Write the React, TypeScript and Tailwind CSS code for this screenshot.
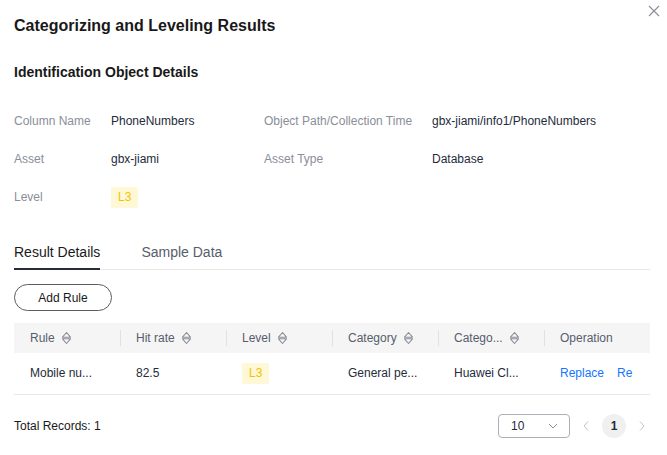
import React from "react";

function SortIcon() {
  return (
    <svg width="11" height="14" viewBox="0 0 11 14" className="ml-[6px] shrink-0">
      <path d="M5.5 1.5 L9.5 6.2 H1.5 Z M1.5 7.8 H9.5 L5.5 12.5 Z" fill="none" stroke="#8a8e99" strokeWidth="1.1" strokeLinejoin="round" />
    </svg>
  );
}

function Badge() {
  return (
    <span className="inline-flex h-[21px] items-center rounded-[2px] bg-[#fff8d6] px-[7px] text-[12px] text-[#f2c200]">L3</span>
  );
}

const cols = [
  { title: "Rule", sort: true },
  { title: "Hit rate", sort: true },
  { title: "Level", sort: true },
  { title: "Category", sort: true },
  { title: "Catego...", sort: true },
  { title: "Operation", sort: false },
];

export default function App() {
  return (
    <div className="relative h-[455px] w-[667px] overflow-hidden bg-white font-['Liberation_Sans',Arial,sans-serif] text-[#252b3a]">
      <button className="absolute right-[6px] top-[4px] p-[1px]" aria-label="close">
        <svg width="12" height="12" viewBox="0 0 12 12">
          <path d="M1 1 L11 11 M11 1 L1 11" stroke="#8a8e99" strokeWidth="1.1" />
        </svg>
      </button>

      <div className="pl-[14px] pr-[17px] pt-[14px]">
        <h1 className="text-[16px] font-bold leading-[24px] text-[#191919]">Categorizing and Leveling Results</h1>

        <h2 className="mt-[24px] text-[14px] font-bold leading-[20px] text-[#191919]">Identification Object Details</h2>

        <div className="mt-[20px] grid grid-cols-[97px_153px_168px_1fr] text-[12px]">
          <div className="flex h-[38px] items-center text-[#8a8e99]">Column Name</div>
          <div className="flex h-[38px] items-center">PhoneNumbers</div>
          <div className="flex h-[38px] items-center text-[#8a8e99]">Object Path/Collection Time</div>
          <div className="flex h-[38px] items-center">gbx-jiami/info1/PhoneNumbers</div>

          <div className="flex h-[38px] items-center text-[#8a8e99]">Asset</div>
          <div className="flex h-[38px] items-center">gbx-jiami</div>
          <div className="flex h-[38px] items-center text-[#8a8e99]">Asset Type</div>
          <div className="flex h-[38px] items-center">Database</div>

          <div className="flex h-[38px] items-center text-[#8a8e99]">Level</div>
          <div className="flex h-[38px] items-center"><Badge /></div>
          <div />
          <div />
        </div>

        <div className="mt-[26px] flex gap-[41px] border-b border-[#e8e8e8] text-[14px]">
          <div className="-mb-px border-b-2 border-[#252b3a] pb-[6px] leading-[20px] text-[#191919]">Result Details</div>
          <div className="pb-[6px] leading-[20px] text-[#575d6c]">Sample Data</div>
        </div>

        <button className="mt-[14px] h-[27px] w-[98px] rounded-full border border-[#5c5c5c] text-[12px] text-[#191919]">Add Rule</button>

        <table className="mt-[12px] w-full table-fixed border-collapse text-[12px]">
          <thead>
            <tr className="h-[30px] bg-[#f5f5f5]">
              {cols.map((c, i) => (
                <th key={c.title} className="relative px-[16px] text-left font-normal text-[#575d6c]">
                  {i > 0 && <span className="absolute left-0 top-[7px] h-[16px] w-px bg-[#dfe1e6]" />}
                  <span className="flex items-center whitespace-nowrap">
                    {c.title}
                    {c.sort && <SortIcon />}
                  </span>
                </th>
              ))}
            </tr>
          </thead>
          <tbody>
            <tr className="h-[41px] border-b border-[#e8e8e8]">
              <td className="whitespace-nowrap px-[16px]">Mobile nu...</td>
              <td className="px-[16px]">82.5</td>
              <td className="px-[16px]"><Badge /></td>
              <td className="whitespace-nowrap px-[16px]">General pe...</td>
              <td className="whitespace-nowrap px-[16px]">Huawei Cl...</td>
              <td className="px-[16px]">
                <div className="flex gap-[13px] whitespace-nowrap text-[#1476ff]">
                  <span>Replace</span>
                  <span>Re</span>
                </div>
              </td>
            </tr>
          </tbody>
        </table>

        <div className="mt-[19px] flex items-center justify-between text-[12px]">
          <span className="text-[#191919]">Total Records: 1</span>
          <div className="flex items-center pr-[4px]">
            <div className="flex h-[24px] w-[72px] items-center justify-between rounded-[4px] border border-[#adb0b8] pl-[12px] pr-[10px]">
              <span>10</span>
              <svg width="12" height="12" viewBox="0 0 12 12">
                <path d="M2 4 L6 8 L10 4" fill="none" stroke="#8a8e99" strokeWidth="1" />
              </svg>
            </div>
            <svg width="8" height="12" viewBox="0 0 8 12" className="ml-[12px]">
              <path d="M6 1.5 L2 6 L6 10.5" fill="none" stroke="#c2c4c9" strokeWidth="1" />
            </svg>
            <span className="ml-[12px] flex h-[24px] w-[24px] items-center justify-center rounded-full bg-[#f0f0f0] font-bold">1</span>
            <svg width="8" height="12" viewBox="0 0 8 12" className="ml-[12px]">
              <path d="M2 1.5 L6 6 L2 10.5" fill="none" stroke="#c2c4c9" strokeWidth="1" />
            </svg>
          </div>
        </div>
      </div>
    </div>
  );
}
